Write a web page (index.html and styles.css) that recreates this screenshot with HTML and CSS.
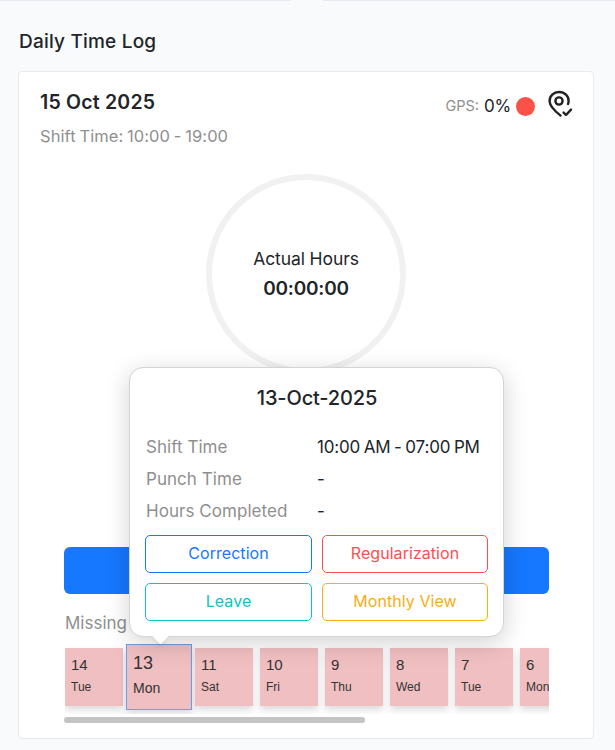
FILE: index.html
```html
<!DOCTYPE html>
<html lang="en">
<head>
<meta charset="utf-8">
<title>Daily Time Log</title>
<link rel="stylesheet" href="styles.css">
</head>
<body>
<div class="topline"><span class="topline-seg topline-left"></span><span class="topline-seg topline-right"></span></div>
<main class="page">
  <h1 class="page-title">Daily Time Log</h1>
  <section class="card">
    <header class="card-head">
      <div class="head-left">
        <div class="date">15 Oct 2025</div>
        <div class="shift">Shift Time: 10:00 - 19:00</div>
      </div>
      <div class="gps">
        <span class="gps-label">GPS:</span>
        <span class="gps-value">0%</span>
        <span class="gps-dot"></span>
        <svg class="gps-icon" viewBox="0 0 26 28" width="26" height="28" fill="none" stroke="#222" stroke-width="2.4" stroke-linecap="round" stroke-linejoin="round">
          <path d="M13.5 25.5 C11 23.5 3 17.5 2.6 11.5 C2.3 6 6.8 2 12 2 C17.5 2 22 6 21.6 11.5 C21.5 12.5 21.3 13.3 21 14"/>
          <circle cx="12" cy="11" r="3.6"/>
          <path d="M16.6 22.6 L19 25 L24 19.6"/>
        </svg>
      </div>
    </header>
    <div class="ring-wrap">
      <div class="ring">
        <div class="ring-label">Actual Hours</div>
        <div class="ring-time">00:00:00</div>
      </div>
    </div>
    <button class="punch" type="button"></button>
    <div class="missing">Missing Punch</div>
    <div class="days-wrap">
      <div class="days">
        <div class="day"><span class="day-num">14</span><span class="day-name">Tue</span></div>
        <div class="day day-active"><span class="day-num">13</span><span class="day-name">Mon</span></div>
        <div class="day"><span class="day-num">11</span><span class="day-name">Sat</span></div>
        <div class="day"><span class="day-num">10</span><span class="day-name">Fri</span></div>
        <div class="day"><span class="day-num">9</span><span class="day-name">Thu</span></div>
        <div class="day"><span class="day-num">8</span><span class="day-name">Wed</span></div>
        <div class="day"><span class="day-num">7</span><span class="day-name">Tue</span></div>
        <div class="day"><span class="day-num">6</span><span class="day-name">Mon</span></div>
      </div>
    </div>
    <div class="scrollbar"></div>

    <div class="popover">
      <div class="pop-title">13-Oct-2025</div>
      <dl class="pop-rows">
        <dt>Shift Time</dt><dd>10:00 AM - 07:00 PM</dd>
        <dt>Punch Time</dt><dd>-</dd>
        <dt>Hours Completed</dt><dd>-</dd>
      </dl>
      <div class="pop-actions">
        <button class="pop-btn btn-blue" type="button">Correction</button>
        <button class="pop-btn btn-red" type="button">Regularization</button>
        <button class="pop-btn btn-teal" type="button">Leave</button>
        <button class="pop-btn btn-amber" type="button">Monthly View</button>
      </div>
      <span class="pop-arrow"></span>
    </div>
  </section>
</main>
</body>
</html>
```
FILE: styles.css
```css
* { box-sizing: border-box; }
html, body { margin: 0; padding: 0; height: 750px; overflow: hidden; }
body {
  background: #f9fafb;
  font-family: Inter, "Liberation Sans", sans-serif;
  color: #212529;
}
.topline { display: flex; justify-content: space-between; height: 1px; }
.topline-seg { display: block; background: #e6eaf3; height: 1px; }
.topline-left { width: 291px; }
.topline-right { width: 292px; }
.page { padding: 0 21px 0 18px; }
.page-title {
  margin: 30px 0 0 1px;
  font-size: 19px;
  line-height: 22px;
  font-weight: 500;
  letter-spacing: 0.2px;
}
.card {
  position: relative;
  margin-top: 18px;
  height: 668px;
  background: #fff;
  border: 1px solid #e8eaf0;
  border-radius: 4px;
  padding: 18px 0 0;
}
.card-head { display: flex; justify-content: space-between; padding: 0 20px 0 21px; }
.date { font-size: 19.5px; line-height: 24px; font-weight: 600; letter-spacing: 0.2px; }
.shift { margin-top: 12px; font-size: 16.5px; line-height: 20px; color: #8f8f8f; letter-spacing: 0.08px; word-spacing: -1px; }
.gps { display: flex; align-items: center; align-self: flex-start; height: 28px; }
.gps-label { font-size: 14.5px; color: #8f8f8f; margin-top: 3px; }
.gps-value { font-size: 17px; margin: 3px 0 0 5px; letter-spacing: -0.2px; }
.gps-dot { width: 19px; height: 19px; border-radius: 50%; background: #fa5246; margin: 4px 0 0 5px; }
.gps-icon { margin-left: 12px; }
.ring-wrap { display: flex; justify-content: center; margin-top: 28px; }
.ring {
  width: 200px; height: 200px;
  border: 6px solid #f1f1f1;
  border-radius: 50%;
  display: flex; flex-direction: column; align-items: center; justify-content: center;
}
.ring-label { font-size: 17.5px; line-height: 22px; letter-spacing: -0.1px; }
.ring-time { margin-top: 7px; font-size: 19px; line-height: 24px; font-weight: 600; letter-spacing: -0.2px; }
.punch {
  display: block;
  margin: 173px 0 0 45px;
  width: 485px; height: 47px;
  background: #1677ff;
  border: 0;
  border-radius: 6px;
}
.missing { margin: 18px 0 0 46px; font-size: 17px; line-height: 22px; color: #8f8f8f; }
.days-wrap { margin: 10px 0 0 46px; width: 484px; height: 70px; overflow: hidden; }
.days { display: flex; align-items: center; gap: 7px; height: 74px; padding-bottom: 8px; }
.day {
  flex: 0 0 58px; height: 58px;
  background: #f0bfc1;
  padding: 8px 6px 0;
  display: flex; flex-direction: column;
  box-shadow: 0 4px 7px rgba(0,0,0,.14);
  color: #333;
}
.day-num { font-family: "Liberation Sans", sans-serif; font-size: 15px; line-height: 18px; }
.day-name { font-family: "Liberation Sans", sans-serif; font-size: 12px; line-height: 14px; margin-top: 6px; white-space: nowrap; }
.day-active {
  flex-basis: 66px; height: 66px;
  margin: 0 -4px;
  border: 1px solid #6c9ff0;
  padding: 7px 6px 0;
}
.day-active .day-num { font-size: 18px; line-height: 22px; }
.day-active .day-name { font-size: 14px; line-height: 16px; margin-top: 6px; }
.scrollbar { margin: 3px 0 0 45px; width: 301px; height: 6px; border-radius: 3px; background: #c4c4c4; }
.popover {
  position: absolute;
  left: 110px; top: 295px;
  width: 375px; height: 270px;
  background: #fff;
  border: 1px solid #d3d4d9;
  border-radius: 14px;
  box-shadow: 0 6px 24px rgba(0,0,0,.18);
  padding: 18px 15px 0;
}
.pop-title { text-align: center; font-size: 20px; line-height: 24px; font-weight: 500; letter-spacing: -0.15px; padding-left: 1px; }
.pop-rows {
  margin: 21px 0 0;
  display: grid;
  grid-template-columns: 172px 1fr;
  grid-auto-rows: 32px;
  font-size: 17px;
  align-items: center;
}
.pop-rows dt { padding-left: 1px; color: #8f8f8f; letter-spacing: 0.05px; }
.pop-rows dd { margin: 0; letter-spacing: -0.17px; word-spacing: -1px; white-space: nowrap; }
.pop-actions { margin-top: 8px; display: grid; grid-template-columns: 167px 166px; gap: 10px; grid-auto-rows: 38px; }
.pop-btn {
  font-family: inherit;
  font-size: 16px;
  background: #fff;
  border: 1px solid;
  border-radius: 5px;
  padding: 0 0 2px;
  letter-spacing: 0.05px;
}
.btn-blue { color: #1677ff; border-color: #1677ff; }
.btn-red { color: #ff4d4f; border-color: #ff4d4f; }
.btn-teal { color: #13c2c2; border-color: #13c2c2; }
.btn-amber { color: #faad14; border-color: #faad14; }
.pop-arrow {
  position: absolute;
  left: 25px; bottom: -6px;
  width: 11px; height: 11px;
  background: #fff;
  transform: rotate(45deg);
  box-shadow: 3px 3px 5px rgba(0,0,0,.06);
}
```
